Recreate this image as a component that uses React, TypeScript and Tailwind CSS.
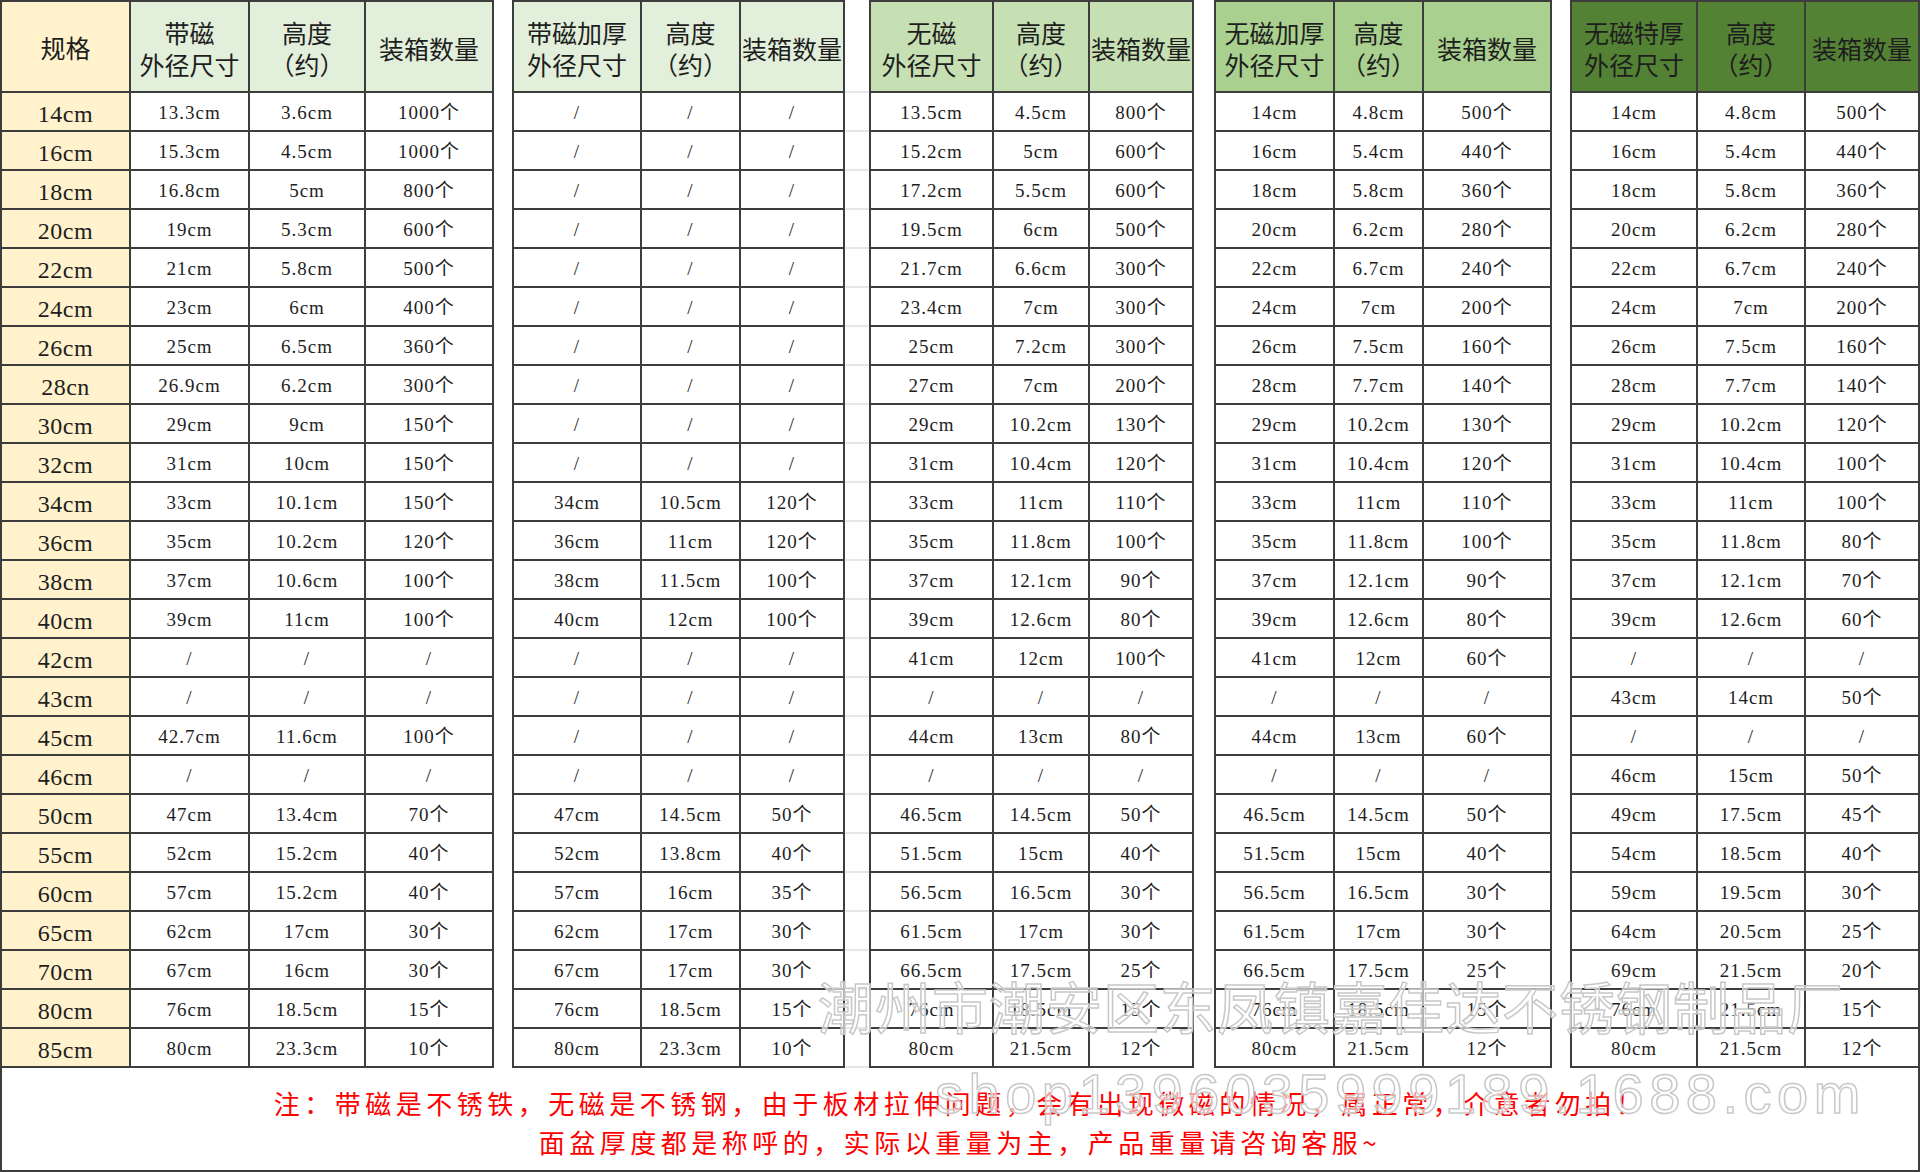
import * as React from "react";

const heads: { bg: string; title: string[] }[][] = [
    [
        { bg: "bg-[#e2efda]", title: ["带磁", "外径尺寸"] },
        { bg: "bg-[#e2efda]", title: ["高度", "（约）"] },
        { bg: "bg-[#e2efda]", title: ["装箱数量"] },
    ],
    [
        { bg: "bg-[#e2efda]", title: ["带磁加厚", "外径尺寸"] },
        { bg: "bg-[#e2efda]", title: ["高度", "（约）"] },
        { bg: "bg-[#e2efda]", title: ["装箱数量"] },
    ],
    [
        { bg: "bg-[#c6e0b4]", title: ["无磁", "外径尺寸"] },
        { bg: "bg-[#c6e0b4]", title: ["高度", "（约）"] },
        { bg: "bg-[#c6e0b4]", title: ["装箱数量"] },
    ],
    [
        { bg: "bg-[#a9d08e]", title: ["无磁加厚", "外径尺寸"] },
        { bg: "bg-[#a9d08e]", title: ["高度", "（约）"] },
        { bg: "bg-[#a9d08e]", title: ["装箱数量"] },
    ],
    [
        { bg: "bg-[#548235]", title: ["无磁特厚", "外径尺寸"] },
        { bg: "bg-[#548235]", title: ["高度", "（约）"] },
        { bg: "bg-[#548235]", title: ["装箱数量"] },
    ],
];

// 规格, then 5 groups of 外径 / 高度 / 装箱数量
const rows: string[][] = [
    ["14cm", "13.3cm", "3.6cm", "1000个", "/", "/", "/", "13.5cm", "4.5cm", "800个", "14cm", "4.8cm", "500个", "14cm", "4.8cm", "500个"],
    ["16cm", "15.3cm", "4.5cm", "1000个", "/", "/", "/", "15.2cm", "5cm", "600个", "16cm", "5.4cm", "440个", "16cm", "5.4cm", "440个"],
    ["18cm", "16.8cm", "5cm", "800个", "/", "/", "/", "17.2cm", "5.5cm", "600个", "18cm", "5.8cm", "360个", "18cm", "5.8cm", "360个"],
    ["20cm", "19cm", "5.3cm", "600个", "/", "/", "/", "19.5cm", "6cm", "500个", "20cm", "6.2cm", "280个", "20cm", "6.2cm", "280个"],
    ["22cm", "21cm", "5.8cm", "500个", "/", "/", "/", "21.7cm", "6.6cm", "300个", "22cm", "6.7cm", "240个", "22cm", "6.7cm", "240个"],
    ["24cm", "23cm", "6cm", "400个", "/", "/", "/", "23.4cm", "7cm", "300个", "24cm", "7cm", "200个", "24cm", "7cm", "200个"],
    ["26cm", "25cm", "6.5cm", "360个", "/", "/", "/", "25cm", "7.2cm", "300个", "26cm", "7.5cm", "160个", "26cm", "7.5cm", "160个"],
    ["28cn", "26.9cm", "6.2cm", "300个", "/", "/", "/", "27cm", "7cm", "200个", "28cm", "7.7cm", "140个", "28cm", "7.7cm", "140个"],
    ["30cm", "29cm", "9cm", "150个", "/", "/", "/", "29cm", "10.2cm", "130个", "29cm", "10.2cm", "130个", "29cm", "10.2cm", "120个"],
    ["32cm", "31cm", "10cm", "150个", "/", "/", "/", "31cm", "10.4cm", "120个", "31cm", "10.4cm", "120个", "31cm", "10.4cm", "100个"],
    ["34cm", "33cm", "10.1cm", "150个", "34cm", "10.5cm", "120个", "33cm", "11cm", "110个", "33cm", "11cm", "110个", "33cm", "11cm", "100个"],
    ["36cm", "35cm", "10.2cm", "120个", "36cm", "11cm", "120个", "35cm", "11.8cm", "100个", "35cm", "11.8cm", "100个", "35cm", "11.8cm", "80个"],
    ["38cm", "37cm", "10.6cm", "100个", "38cm", "11.5cm", "100个", "37cm", "12.1cm", "90个", "37cm", "12.1cm", "90个", "37cm", "12.1cm", "70个"],
    ["40cm", "39cm", "11cm", "100个", "40cm", "12cm", "100个", "39cm", "12.6cm", "80个", "39cm", "12.6cm", "80个", "39cm", "12.6cm", "60个"],
    ["42cm", "/", "/", "/", "/", "/", "/", "41cm", "12cm", "100个", "41cm", "12cm", "60个", "/", "/", "/"],
    ["43cm", "/", "/", "/", "/", "/", "/", "/", "/", "/", "/", "/", "/", "43cm", "14cm", "50个"],
    ["45cm", "42.7cm", "11.6cm", "100个", "/", "/", "/", "44cm", "13cm", "80个", "44cm", "13cm", "60个", "/", "/", "/"],
    ["46cm", "/", "/", "/", "/", "/", "/", "/", "/", "/", "/", "/", "/", "46cm", "15cm", "50个"],
    ["50cm", "47cm", "13.4cm", "70个", "47cm", "14.5cm", "50个", "46.5cm", "14.5cm", "50个", "46.5cm", "14.5cm", "50个", "49cm", "17.5cm", "45个"],
    ["55cm", "52cm", "15.2cm", "40个", "52cm", "13.8cm", "40个", "51.5cm", "15cm", "40个", "51.5cm", "15cm", "40个", "54cm", "18.5cm", "40个"],
    ["60cm", "57cm", "15.2cm", "40个", "57cm", "16cm", "35个", "56.5cm", "16.5cm", "30个", "56.5cm", "16.5cm", "30个", "59cm", "19.5cm", "30个"],
    ["65cm", "62cm", "17cm", "30个", "62cm", "17cm", "30个", "61.5cm", "17cm", "30个", "61.5cm", "17cm", "30个", "64cm", "20.5cm", "25个"],
    ["70cm", "67cm", "16cm", "30个", "67cm", "17cm", "30个", "66.5cm", "17.5cm", "25个", "66.5cm", "17.5cm", "25个", "69cm", "21.5cm", "20个"],
    ["80cm", "76cm", "18.5cm", "15个", "76cm", "18.5cm", "15个", "76cm", "18.5cm", "15个", "76cm", "18.5cm", "15个", "76cm", "21.5cm", "15个"],
    ["85cm", "80cm", "23.3cm", "10个", "80cm", "23.3cm", "10个", "80cm", "21.5cm", "12个", "80cm", "21.5cm", "12个", "80cm", "21.5cm", "12个"],
];

const line = "border-[#3d3d3d]";

function Spacer({ faint }: { faint?: boolean }) {
    return (
        <div
            className={`bg-white border-r-2 ${line} ${faint ? "after:block after:h-full after:border-b-2 after:border-[#e6e6e6]" : ""}`}
        />
    );
}

export default function App() {
    return (
        <div className="relative w-[1920px] h-[1172px] bg-white overflow-hidden font-['Noto_Sans_CJK_SC',sans-serif] text-[#1e1e1e]">
            <div className="grid grid-cols-[131px_119px_116px_128px_20px_128px_99px_104px_26px_123px_96px_104px_22px_119px_89px_128px_20px_126px_108px_114px] grid-rows-[93px_repeat(25,39px)]">
                {/* header */}
                <div className={`flex items-center justify-center bg-[#fff2cc] border-2 ${line} text-[25px] leading-[32px]`}>
                    规格
                </div>
                {heads.map((group, gi) => (
                    <React.Fragment key={gi}>
                        {gi > 0 && <Spacer faint={gi === 2} />}
                        {group.map((h, hi) => (
                            <div
                                key={hi}
                                className={`flex flex-col items-center justify-center pt-[2px] ${h.bg} border-t-2 border-r-2 border-b-2 ${line} text-[25px] leading-[32px] whitespace-nowrap`}
                            >
                                {h.title.map((t, ti) => (
                                    <span key={ti}>{t}</span>
                                ))}
                            </div>
                        ))}
                    </React.Fragment>
                ))}

                {/* body */}
                {rows.map((r, ri) => (
                    <React.Fragment key={ri}>
                        <div className={`flex items-center justify-center pt-[4px] bg-[#fff2cc] border-l-2 border-r-2 border-b-2 ${line} font-['Liberation_Serif','Noto_Sans_CJK_SC',serif] text-[24px] tracking-[0.5px]`}>
                            {r[0]}
                        </div>
                        {[0, 1, 2, 3, 4].map((gi) => (
                            <React.Fragment key={gi}>
                                {gi > 0 && <Spacer faint={gi === 2} />}
                                {[0, 1, 2].map((ci) => (
                                    <div
                                        key={ci}
                                        className={`flex items-center justify-center pt-[4px] bg-white border-r-2 border-b-2 ${line} font-['Liberation_Serif','Noto_Sans_CJK_SC',serif] text-[19px] tracking-[1px] whitespace-nowrap`}
                                    >
                                        {r[1 + gi * 3 + ci]}
                                    </div>
                                ))}
                            </React.Fragment>
                        ))}
                    </React.Fragment>
                ))}
            </div>

            {/* note */}
            <div className={`h-[104px] border-l-2 border-r-2 border-b-2 ${line} pt-[15px] flex flex-col items-center text-[#ff0000] text-[26px] leading-[39px] tracking-[4.5px]`}>
                <p>注：带磁是不锈铁，无磁是不锈钢，由于板材拉伸问题，会有出现微磁的情况，属正常，介意者勿拍！</p>
                <p>面盆厚度都是称呼的，实际以重量为主，产品重量请咨询客服~</p>
            </div>

            {/* watermarks */}
            <div className="pointer-events-none absolute left-[818px] top-[977px] text-[56px] leading-[56px] tracking-[1px] whitespace-nowrap text-white/60 [-webkit-text-stroke:1.5px_#c8c8c8]">
                潮州市潮安区东凤镇嘉佳达不锈钢制品厂
            </div>
            <div className="pointer-events-none absolute left-[935px] top-[1066px] font-['Liberation_Sans',sans-serif] text-[56px] leading-[56px] tracking-[5.5px] whitespace-nowrap text-white/60 [-webkit-text-stroke:1.5px_#c8c8c8]">
                shop1396035999189.1688.com
            </div>
        </div>
    );
}
